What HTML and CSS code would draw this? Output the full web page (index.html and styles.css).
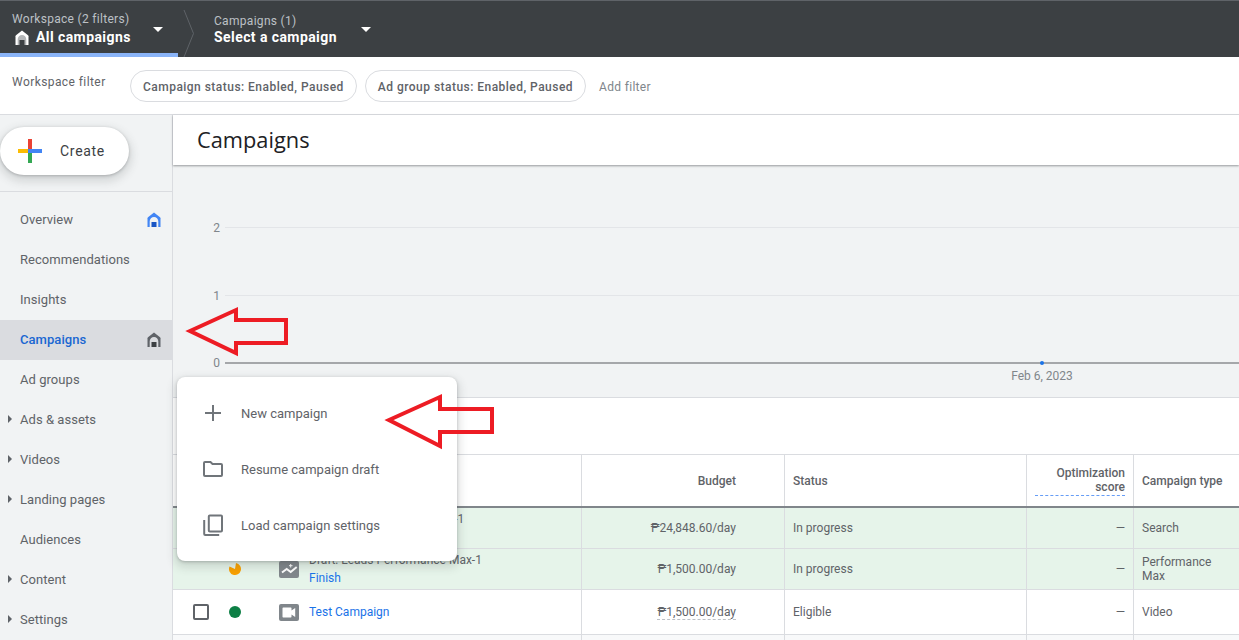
FILE: index.html
```html
<!DOCTYPE html>
<html lang="en">
<head>
  <meta charset="UTF-8">
  <meta name="viewport" content="width=device-width, initial-scale=1.0">
  <title>Campaigns</title>
  <link rel="stylesheet" href="styles.css">
</head>
<body>
  <svg class="icon-defs" width="0" height="0">
    <symbol id="home" viewBox="0 0 14 15">
      <path d="M7 .5 13 5.200c.3.3.5.6.5 1V15H.5V6.200c0-.4.200-.7.500-1Z" fill="currentColor"/>
      <path d="M2.700 15V9.300a4.300 4.300 0 0 1 8.600 0V15Z" fill="var(--arch)"/>
      <rect x="4.500" y="10" width="5" height="5" fill="var(--door)"/>
    </symbol>
  </svg>

  <!-- Top bar -->
  <header class="topbar">
    <div class="crumb crumb-first">
      <div class="crumb-label">Workspace (2 filters)</div>
      <div class="crumb-value">
        <svg class="crumb-home"><use href="#home"/></svg>
        All campaigns
      </div>
      <span class="caret"></span>
    </div>
    <svg class="crumb-sep" width="12" height="47" viewBox="0 0 12 47">
      <path d="M1 0 10.500 23.500 1 47" fill="none" stroke="#5f6368" stroke-width="1"/>
    </svg>
    <div class="crumb crumb-second">
      <div class="crumb-label">Campaigns (1)</div>
      <div class="crumb-value">Select a campaign</div>
      <span class="caret"></span>
    </div>
  </header>

  <!-- Workspace filter -->
  <div class="filterbar">
    <span class="filter-title">Workspace filter</span>
    <span class="chip">Campaign status: Enabled, Paused</span>
    <span class="chip">Ad group status: Enabled, Paused</span>
    <span class="add-filter">Add filter</span>
  </div>

  <div class="layout">
    <!-- Sidebar -->
    <aside class="sidebar">
      <div class="create-wrap">
        <button class="create">
          <svg width="24" height="24" viewBox="0 0 24 24">
            <rect x="10" y="0" width="4" height="10" fill="#ea4335"/>
            <rect x="14" y="10" width="10" height="4" fill="#4285f4"/>
            <rect x="10" y="14" width="4" height="10" fill="#34a853"/>
            <rect x="0" y="10" width="10" height="4" fill="#fbbc04"/>
            <rect x="10" y="10" width="4" height="4" fill="#4285f4"/>
          </svg>
          Create
        </button>
      </div>
      <nav class="nav">
        <a class="nav-item">Overview<svg class="nav-home nav-home-blue"><use href="#home"/></svg></a>
        <a class="nav-item">Recommendations</a>
        <a class="nav-item">Insights</a>
        <a class="nav-item active">Campaigns<svg class="nav-home"><use href="#home"/></svg></a>
        <a class="nav-item">Ad groups</a>
        <a class="nav-item has-sub">Ads &amp; assets</a>
        <a class="nav-item has-sub">Videos</a>
        <a class="nav-item has-sub">Landing pages</a>
        <a class="nav-item">Audiences</a>
        <a class="nav-item has-sub">Content</a>
        <a class="nav-item has-sub">Settings</a>
      </nav>
    </aside>

    <main class="main">
      <div class="page-title">Campaigns</div>

      <section class="chart">
        <svg width="1066" height="232" viewBox="0 0 1066 232">
          <g class="grid-line">
            <line x1="52" y1="62.500" x2="1066" y2="62.500"/>
            <line x1="52" y1="130.500" x2="1066" y2="130.500"/>
          </g>
          <line class="base-line" x1="52" y1="198" x2="1066" y2="198"/>
          <text class="axis" x="47" y="67" text-anchor="end">2</text>
          <text class="axis" x="47" y="135" text-anchor="end">1</text>
          <text class="axis" x="47" y="202" text-anchor="end">0</text>
          <circle cx="869" cy="198" r="2" fill="#1a73e8"/>
          <text class="axis" x="869" y="215" text-anchor="middle">Feb 6, 2023</text>
        </svg>
      </section>

      <div class="table-tools"></div>

      <section class="table">
        <div class="row head">
          <div class="cell"></div>
          <div class="cell num">Budget</div>
          <div class="cell">Status</div>
          <div class="cell num"><span class="score">Optimization score</span></div>
          <div class="cell">Campaign type</div>
        </div>

        <div class="row draft">
          <div class="cell name">
            <span class="check-slot"></span>
            <span class="dot-slot"></span>
            <span class="type-icon"></span>
            <div class="name-text">
              <div>Draft: Leads Search Google-1</div>
              <a class="link">Finish</a>
            </div>
          </div>
          <div class="cell num">₱24,848.60/day</div>
          <div class="cell">In progress</div>
          <div class="cell num">—</div>
          <div class="cell">Search</div>
        </div>

        <div class="row draft">
          <div class="cell name">
            <span class="check-slot"></span>
            <span class="dot-slot">
              <svg width="14" height="14" viewBox="0 0 14 14">
                <path d="M8 1.100A6 6 0 1 1 1.500 4.600L7 7Z" fill="#f9a000"/>
              </svg>
            </span>
            <span class="type-icon">
              <svg width="20" height="17" viewBox="0 0 20 17">
                <rect width="20" height="17" rx="2" fill="#80868b"/>
                <path d="M3 11.500 7.700 8 11.700 11 17.700 6" fill="none" stroke="#fff" stroke-width="2"/>
                <path d="M11.700 3v3.500M10 4.700h3.500" fill="none" stroke="#fff" stroke-width="1"/>
              </svg>
            </span>
            <div class="name-text">
              <div>Draft: Leads Performance Max-1</div>
              <a class="link">Finish</a>
            </div>
          </div>
          <div class="cell num">₱1,500.00/day</div>
          <div class="cell">In progress</div>
          <div class="cell num">—</div>
          <div class="cell">Performance Max</div>
        </div>

        <div class="row live">
          <div class="cell name">
            <span class="check-slot"><span class="checkbox"></span></span>
            <span class="dot-slot"><span class="dot"></span></span>
            <span class="type-icon">
              <svg width="20" height="17" viewBox="0 0 20 17">
                <rect width="20" height="17" rx="2" fill="#80868b"/>
                <path d="M4.200 3.500h7.600c.4 0 .7.300.7.700v2.300L16.200 4v9l-3.700-2.500v2.300c0 .4-.3.700-.7.700H4.200c-.4 0-.7-.3-.7-.7V4.200c0-.4.300-.7.700-.7Z" fill="#fff"/>
              </svg>
            </span>
            <div class="name-text"><a class="link">Test Campaign</a></div>
          </div>
          <div class="cell num"><span class="dashed">₱1,500.00/day</span></div>
          <div class="cell">Eligible</div>
          <div class="cell num">—</div>
          <div class="cell">Video</div>
        </div>

        <div class="row next">
          <div class="cell"></div><div class="cell"></div><div class="cell"></div><div class="cell"></div><div class="cell"></div>
        </div>
      </section>
    </main>
  </div>

  <!-- Create menu -->
  <div class="menu">
    <div class="menu-item">
      <svg width="24" height="24" viewBox="0 0 24 24"><path d="M12 4v16M4 12h16" stroke="#70757a" stroke-width="2" fill="none"/></svg>
      New campaign
    </div>
    <div class="menu-item">
      <svg width="24" height="24" viewBox="0 0 24 24"><path d="M3 6c0-.6.400-1 1-1h5.500l2 2H20c.6 0 1 .4 1 1v10c0 .6-.4 1-1 1H4c-.6 0-1-.4-1-1Z" fill="none" stroke="#70757a" stroke-width="2"/></svg>
      Resume campaign draft
    </div>
    <div class="menu-item">
      <svg width="24" height="24" viewBox="0 0 24 24"><rect x="7.800" y="2.500" width="13.200" height="16" rx="1" fill="none" stroke="#70757a" stroke-width="2"/><path d="M3.200 7v14c0 .6.400 1 1 1h14" fill="none" stroke="#70757a" stroke-width="2"/></svg>
      Load campaign settings
    </div>
  </div>

  <!-- Red annotation arrows -->
  <svg class="arrow arrow-one" width="106" height="54" viewBox="0 0 106 54">
    <path d="M5 25 51 4V14H101V37H51V47Z"/>
  </svg>
  <svg class="arrow arrow-two" width="112" height="58" viewBox="0 0 112 58">
    <path d="M6 28 57 5V17H109V40H57V54Z"/>
  </svg>
</body>
</html>
```

FILE: styles.css
```css
/* Global Styles */
* {
  box-sizing: border-box;
}

html, body {
  margin: 0;
  height: 100%;
}

body {
  position: relative;
  width: 1239px;
  height: 640px;
  overflow: hidden;
  font-family: Roboto, "Liberation Sans", sans-serif;
  font-size: 12px;
  color: #3c4043;
  background: #fff;
  display: flex;
  flex-direction: column;
}

.icon-defs {
  position: absolute;
}

/* Top bar */
.topbar {
  height: 57px;
  flex: none;
  display: flex;
  background: #3c4043;
  border-top: 1px solid #5f6368;
  color: #fff;
}

.crumb {
  position: relative;
  height: 56px;
  padding-top: 11px;
}

.crumb-first {
  width: 178px;
  padding-left: 12px;
  border-bottom: 4px solid #8ab4f8;
}

.crumb-second {
  width: 180px;
  margin-left: 18px;
  padding-top: 13px;
  padding-left: 1px;
}

.crumb-sep {
  margin-left: 5px;
  margin-top: 9px;
}

.crumb-label {
  font-size: 12px;
  line-height: 14px;
  color: #bdc1c6;
  letter-spacing: 0.3px;
}

.crumb-value {
  display: flex;
  align-items: center;
  gap: 7px;
  font-size: 14px;
  line-height: 20px;
  font-weight: 700;
  letter-spacing: 0.42px;
}

.crumb-first .crumb-value {
  margin-top: 1px;
}

.crumb-second .crumb-value {
  margin-top: -1px;
}

.crumb-home {
  --arch: #b4b6b8;
  --door: #3c4043;
  width: 14px;
  height: 15px;
  margin-left: 3px;
  color: #fff;
}

.caret {
  position: absolute;
  top: 26px;
  right: 15px;
  border-left: 5.500px solid transparent;
  border-right: 5.500px solid transparent;
  border-top: 5.500px solid #fff;
}

.crumb-second .caret {
  right: 22px;
}

/* Workspace filter */
.filterbar {
  height: 58px;
  flex: none;
  display: flex;
  align-items: flex-start;
  padding: 13px 0 0 12px;
  border-bottom: 1px solid #dadce0;
  background: #fff;
}

.filter-title {
  width: 118px;
  line-height: 24px;
  letter-spacing: 0.42px;
  color: #5f6368;
}

.chip {
  height: 32px;
  line-height: 32px;
  padding: 0 12px;
  margin-right: 8px;
  border: 1px solid #dadce0;
  border-radius: 16px;
  font-weight: 500;
  letter-spacing: 0.47px;
  color: #5f6368;
}

.add-filter {
  margin-left: 5px;
  line-height: 34px;
  letter-spacing: 0.32px;
  color: #80868b;
}

/* Page area */
.layout {
  flex: 1;
  display: flex;
  min-height: 0;
}

.sidebar {
  width: 173px;
  flex: none;
  background: #f1f3f4;
  border-right: 1px solid #dadce0;
}

.create-wrap {
  height: 77px;
  padding-top: 12px;
  border-bottom: 1px solid #dadce0;
}

.create {
  display: flex;
  align-items: center;
  gap: 18px;
  width: 129px;
  height: 48px;
  padding: 0 0 0 18px;
  border: none;
  border-radius: 24px;
  background: #fff;
  box-shadow: 0 1px 3px rgba(60, 64, 67, 0.3), 0 4px 8px 3px rgba(60, 64, 67, 0.15);
  font-family: inherit;
  font-size: 14px;
  font-weight: 400;
  letter-spacing: 0.7px;
  color: #3c4043;
}

.nav {
  padding-top: 8px;
}

.nav-item {
  position: relative;
  display: flex;
  align-items: center;
  height: 40px;
  padding: 0 0 2px 20px;
  font-size: 13px;
  letter-spacing: 0.05px;
  color: #5f6368;
}

.nav-item.active {
  background: #dadce0;
  color: #1967d2;
  font-weight: 500;
}

.has-sub::before {
  content: "";
  position: absolute;
  left: 8px;
  top: 15px;
  border-top: 4px solid transparent;
  border-bottom: 4px solid transparent;
  border-left: 4px solid #5f6368;
}

.nav-home {
  --arch: #dadce0;
  --door: #3c4043;
  position: absolute;
  left: 147px;
  top: 12px;
  width: 14px;
  height: 15px;
  color: #5f6368;
}

.nav-home-blue {
  --arch: #f1f3f4;
  --door: #1a56c4;
  color: #4285f4;
}

/* Main */
.main {
  flex: 1;
  min-width: 0;
  display: flex;
  flex-direction: column;
}

.page-title {
  position: relative;
  flex: none;
  height: 50px;
  padding-left: 24px;
  line-height: 49px;
  font-family: "Open Sans", Roboto, sans-serif;
  font-size: 21.800px;
  color: #202124;
  background: #fff;
  box-shadow: 0 1px 2px rgba(60, 64, 67, 0.5);
}

.chart {
  flex: none;
  height: 233px;
  background: #f1f3f4;
  border-bottom: 1px solid #dadce0;
}

.chart svg {
  display: block;
}

.grid-line line {
  stroke: #e3e5e8;
  stroke-width: 1;
}

.base-line {
  stroke: #a5a7aa;
  stroke-width: 2;
}

.axis {
  font-size: 12px;
  fill: #80868b;
}

.table-tools {
  flex: none;
  height: 56px;
  background: #fff;
}

/* Table */
.table {
  border-top: 1px solid #dadce0;
}

.row {
  display: grid;
  grid-template-columns: 409px 203px 242px 107px 105px;
  border-bottom: 1px solid #dadce0;
}

.cell {
  display: flex;
  align-items: center;
  padding: 0 8px;
  border-right: 1px solid #dadce0;
  line-height: 14px;
  color: #5f6368;
}

.cell:last-child {
  border-right: none;
}

.num {
  justify-content: flex-end;
  text-align: right;
}

.head {
  height: 53px;
  border-bottom: 2px solid #80868b;
}

.head .cell {
  font-weight: 500;
  color: #5f6368;
}

.row .cell:nth-child(2) {
  padding-right: 48px;
}

.score {
  display: block;
  width: 90px;
  padding: 1px 0 1px;
  border-bottom: 1px dashed #669df6;
}

.draft {
  height: 41px;
  background: #e6f4ea;
}

.live {
  height: 45px;
}

.next {
  height: 20px;
  background: #f8f9fa;
}

.name {
  padding: 0;
}

.check-slot {
  display: flex;
  justify-content: center;
  width: 56px;
}

.checkbox {
  width: 16px;
  height: 16px;
  border: 2px solid #5f6368;
  border-radius: 2px;
}

.dot-slot {
  display: flex;
  justify-content: center;
  width: 12px;
  margin-right: 38px;
}

.dot {
  width: 12px;
  height: 12px;
  border-radius: 50%;
  background: #0d7f45;
}

.type-icon {
  width: 20px;
  margin-right: 10px;
}

.type-icon svg,
.dot-slot svg {
  display: block;
  flex: none;
}

.name-text {
  line-height: 18px;
}

.link {
  color: #1a73e8;
}

.dashed {
  border-bottom: 1px dashed #bdc1c6;
}

/* Create menu */
.menu {
  position: absolute;
  left: 177px;
  top: 377px;
  width: 280px;
  padding: 8px 0;
  border-radius: 8px;
  background: #fff;
  box-shadow: 0 1px 3px rgba(60, 64, 67, 0.3), 0 4px 8px 3px rgba(60, 64, 67, 0.15);
}

.menu-item {
  display: flex;
  align-items: center;
  gap: 16px;
  height: 56px;
  padding-left: 24px;
  font-size: 13px;
  letter-spacing: 0;
  color: #5f6368;
}

/* Annotation arrows */
.arrow {
  position: absolute;
  fill: none;
  stroke: #ed1c24;
  stroke-width: 4;
}

.arrow-one {
  left: 185px;
  top: 306px;
}

.arrow-two {
  left: 383px;
  top: 392px;
}
```
